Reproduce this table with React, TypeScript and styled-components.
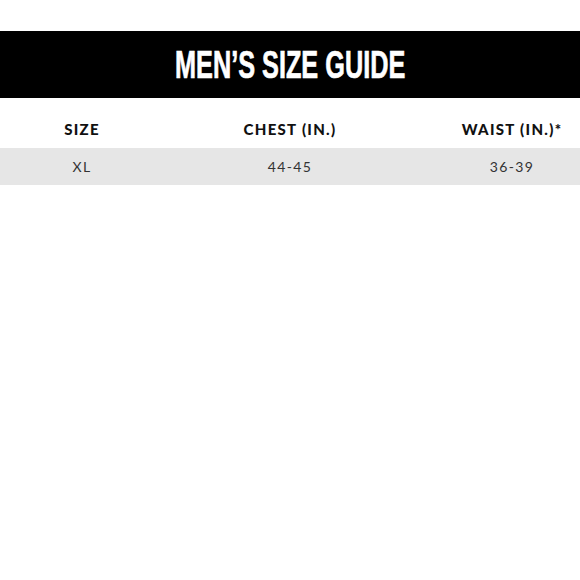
import styled, { createGlobalStyle } from "styled-components";

const GlobalStyle = createGlobalStyle`
  html, body {
    margin: 0;
    padding: 0;
    background: #ffffff;
  }
`;

const sizes = [{ size: "XL", chest: "44-45", waist: "36-39" }];

export default function App() {
  return (
    <>
      <GlobalStyle />
      <Page>
        <TitleBar>
          <Title>MEN’S SIZE GUIDE</Title>
        </TitleBar>
        <HeadRow>
          <HeadCell>SIZE</HeadCell>
          <HeadCell>CHEST (IN.)</HeadCell>
          <HeadCell $last>WAIST (IN.)*</HeadCell>
        </HeadRow>
        {sizes.map((row) => (
          <DataRow key={row.size}>
            <DataCell>{row.size}</DataCell>
            <DataCell>{row.chest}</DataCell>
            <DataCell $last>{row.waist}</DataCell>
          </DataRow>
        ))}
      </Page>
    </>
  );
}

const Page = styled.div`
  width: 580px;
  height: 580px;
  padding-top: 31px;
  box-sizing: border-box;
  background: #ffffff;
`;

const TitleBar = styled.div`
  height: 67px;
  background: #000000;
  display: flex;
  justify-content: center;
  align-items: center;
`;

const Title = styled.h1`
  margin: 0;
  display: inline-block;
  font-family: "Liberation Sans", Arial, sans-serif;
  font-weight: 700;
  font-size: 38px;
  line-height: 38px;
  color: #ffffff;
  -webkit-text-stroke: 0.7px #ffffff;
  transform: scaleX(0.665);
  white-space: nowrap;
`;

const Row = styled.div`
  display: grid;
  grid-template-columns: 164px 252px 1fr;
  align-items: center;
`;

const HeadRow = styled(Row)`
  padding: 24px 0 11px;
`;

const DataRow = styled(Row)`
  height: 37px;
  background: #e6e6e6;
`;

const HeadCell = styled.div<{ $last?: boolean }>`
  text-align: center;
  padding-left: ${(p) => (p.$last ? "28px" : "0")};
  font-family: Lato, "Liberation Sans", sans-serif;
  font-weight: 900;
  font-size: 15px;
  line-height: 15px;
  letter-spacing: 1.3px;
  color: #111111;
`;

const DataCell = styled.div<{ $last?: boolean }>`
  text-align: center;
  padding-left: ${(p) => (p.$last ? "28px" : "0")};
  font-family: Lato, "Liberation Sans", sans-serif;
  font-weight: 400;
  font-size: 14px;
  letter-spacing: 1.4px;
  color: #333333;
`;
